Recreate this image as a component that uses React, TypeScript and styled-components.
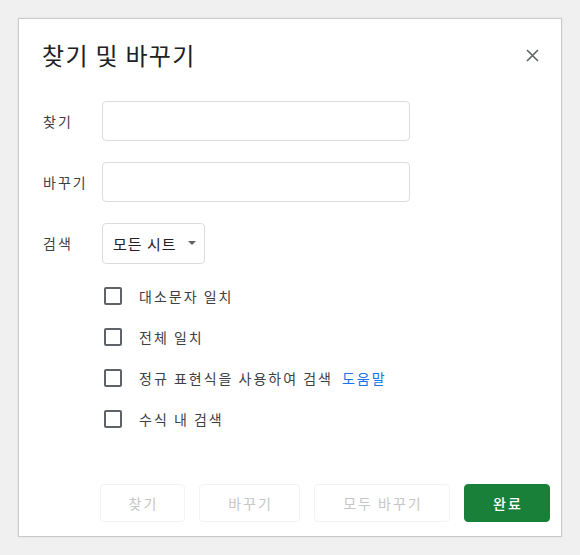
import React from "react";
import styled, { createGlobalStyle } from "styled-components";

const GlobalStyle = createGlobalStyle`
  html, body {
    margin: 0;
    padding: 0;
    background: #f1f1f1;
  }
  body {
    font-family: "Noto Sans CJK KR", "Noto Sans", Roboto, sans-serif;
  }
`;

const Page = styled.div`
  width: 580px;
  height: 555px;
  padding: 18px 0 0 18px;
  box-sizing: border-box;
  background: #f0f0f0;
`;

const Dialog = styled.div`
  width: 544px;
  height: 519px;
  box-sizing: border-box;
  background: #fff;
  border: 1px solid #c9c9c9;
  box-shadow: 0 0 2px rgba(0, 0, 0, 0.08);
  display: flex;
  flex-direction: column;
  padding: 19px 11px 14px 24px;
`;

const Header = styled.div`
  display: flex;
  align-items: center;
  justify-content: space-between;
  height: 34px;
  padding-right: 11px;
`;

const Title = styled.h1`
  margin: 0 0 0 -1px;
  font-size: 24px;
  font-weight: 400;
  letter-spacing: 1.3px;
  color: #202124;
  line-height: 34px;
`;

const CloseButton = styled.button`
  border: 0;
  background: none;
  padding: 0;
  width: 14px;
  height: 14px;
  display: flex;
  align-items: center;
  justify-content: center;
  cursor: pointer;
`;

const Form = styled.div`
  display: grid;
  grid-template-columns: 59px auto;
  grid-auto-rows: 40px;
  row-gap: 21px;
  align-items: center;
  margin-top: 29px;
`;

const Label = styled.label`
  font-size: 14px;
  letter-spacing: 2px;
  color: #3c4043;
`;

const TextInput = styled.input`
  width: 308px;
  height: 40px;
  box-sizing: border-box;
  border: 1px solid #dadce0;
  border-radius: 4px;
  outline: none;
  padding: 0 10px;
  font-size: 14px;
`;

const Select = styled.button`
  width: 103px;
  height: 41px;
  box-sizing: border-box;
  border: 1px solid #dadce0;
  border-radius: 4px;
  background: #fff;
  display: flex;
  align-items: center;
  gap: 11px;
  padding: 0 0 0 10px;
  font-family: inherit;
  font-size: 15px;
  letter-spacing: 1px;
  color: #202124;
`;

const Caret = styled.span`
  width: 0;
  height: 0;
  border-left: 4px solid transparent;
  border-right: 4px solid transparent;
  border-top: 4px solid #5f6368;
`;

const Options = styled.div`
  display: flex;
  flex-direction: column;
  margin-top: 12px;
  padding-left: 61px;
`;

const OptionRow = styled.label`
  display: flex;
  align-items: center;
  height: 41px;
  gap: 17px;
  font-size: 14px;
  letter-spacing: 2px;
  color: #3c4043;
`;

const Box = styled.span`
  width: 18px;
  height: 18px;
  box-sizing: border-box;
  border: 2px solid #5f6368;
  border-radius: 2px;
  flex-shrink: 0;
`;

const HelpLink = styled.a`
  color: #1a73e8;
  text-decoration: none;
  margin-left: 9px;
`;

const Footer = styled.div`
  margin-top: auto;
  display: flex;
  justify-content: flex-end;
  gap: 14px;
`;

const Button = styled.button<{ $primary?: boolean; $w: number }>`
  width: ${(p) => p.$w}px;
  height: 38px;
  box-sizing: border-box;
  border-radius: 4px;
  font-family: inherit;
  font-size: 14px;
  letter-spacing: 2px;
  padding: 0 0 0 2px;
  border: 1px solid ${(p) => (p.$primary ? "#188038" : "#f1f3f4")};
  background: ${(p) => (p.$primary ? "#188038" : "#fff")};
  color: ${(p) => (p.$primary ? "#fff" : "#c4c7c5")};
  font-weight: ${(p) => (p.$primary ? 500 : 400)};
`;

const options = ["대소문자 일치", "전체 일치", "정규 표현식을 사용하여 검색", "수식 내 검색"];

export default function App() {
  return (
    <Page>
      <GlobalStyle />
      <Dialog>
        <Header>
          <Title>찾기 및 바꾸기</Title>
          <CloseButton aria-label="닫기">
            <svg width="13" height="13" viewBox="0 0 13 13">
              <path d="M1 1L12 12M12 1L1 12" stroke="#5f6368" strokeWidth="1.6" />
            </svg>
          </CloseButton>
        </Header>
        <Form>
          <Label>찾기</Label>
          <TextInput />
          <Label>바꾸기</Label>
          <TextInput />
          <Label>검색</Label>
          <div>
            <Select>
              모든 시트
              <Caret />
            </Select>
          </div>
        </Form>
        <Options>
          {options.map((o, i) => (
            <OptionRow key={o}>
              <Box />
              <span>
                {o}
                {i === 2 && <HelpLink href="#">도움말</HelpLink>}
              </span>
            </OptionRow>
          ))}
        </Options>
        <Footer>
          <Button $w={85} disabled>찾기</Button>
          <Button $w={101} disabled>바꾸기</Button>
          <Button $w={136} disabled>모두 바꾸기</Button>
          <Button $w={86} $primary>완료</Button>
        </Footer>
      </Dialog>
    </Page>
  );
}
